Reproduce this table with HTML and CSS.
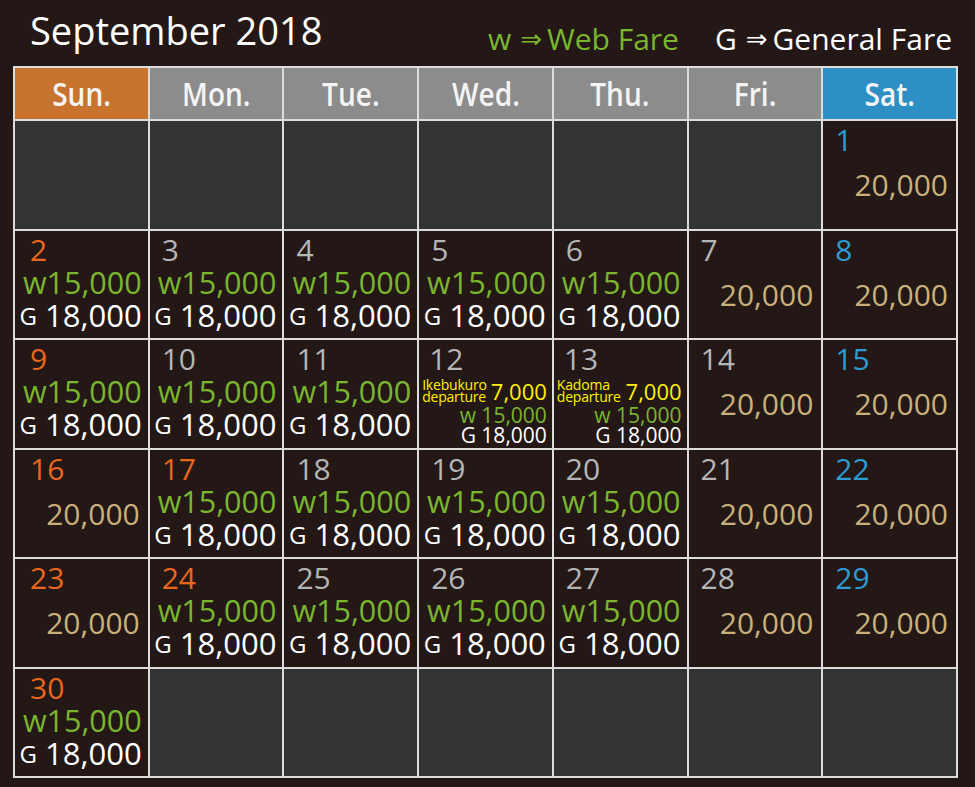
FILE: index.html
```html
<!DOCTYPE html>
<html lang="en">
<head>
<meta charset="utf-8">
<title>September 2018</title>
<link rel="stylesheet" href="styles.css">
</head>
<body>
<div class="page">
  <div class="top">
    <h1 class="title">September 2018</h1>
    <div class="legend">
      <span class="lg-web">w<span class="arrow">⇒</span>Web Fare</span>
      <span class="lg-gen">G<span class="arrow">⇒</span>General Fare</span>
    </div>
  </div>
  <div class="cal">
    <div class="hd hd-sun"><span>Sun.</span></div>
    <div class="hd hd-wk"><span>Mon.</span></div>
    <div class="hd hd-wk"><span>Tue.</span></div>
    <div class="hd hd-wk"><span>Wed.</span></div>
    <div class="hd hd-wk"><span>Thu.</span></div>
    <div class="hd hd-wk"><span>Fri.</span></div>
    <div class="hd hd-sat"><span>Sat.</span></div>

    <!-- row 1 -->
    <div class="cell empty"></div>
    <div class="cell empty"></div>
    <div class="cell empty"></div>
    <div class="cell empty"></div>
    <div class="cell empty"></div>
    <div class="cell empty"></div>
    <div class="cell"><div class="day c-sat">1</div><div class="gen">20,000</div></div>

    <!-- row 2 -->
    <div class="cell first"><div class="day c-sun">2</div><div class="w">w15,000</div><div class="g"><span class="gl">G</span> 18,000</div></div>
    <div class="cell"><div class="day c-wk">3</div><div class="w">w15,000</div><div class="g"><span class="gl">G</span> 18,000</div></div>
    <div class="cell"><div class="day c-wk">4</div><div class="w">w15,000</div><div class="g"><span class="gl">G</span> 18,000</div></div>
    <div class="cell"><div class="day c-wk">5</div><div class="w">w15,000</div><div class="g"><span class="gl">G</span> 18,000</div></div>
    <div class="cell"><div class="day c-wk">6</div><div class="w">w15,000</div><div class="g"><span class="gl">G</span> 18,000</div></div>
    <div class="cell"><div class="day c-wk">7</div><div class="gen">20,000</div></div>
    <div class="cell"><div class="day c-sat">8</div><div class="gen">20,000</div></div>

    <!-- row 3 -->
    <div class="cell first"><div class="day c-sun">9</div><div class="w">w15,000</div><div class="g"><span class="gl">G</span> 18,000</div></div>
    <div class="cell"><div class="day c-wk">10</div><div class="w">w15,000</div><div class="g"><span class="gl">G</span> 18,000</div></div>
    <div class="cell"><div class="day c-wk">11</div><div class="w">w15,000</div><div class="g"><span class="gl">G</span> 18,000</div></div>
    <div class="cell sp">
      <div class="day c-wk">12</div>
      <div class="dep"><span class="lbl">Ikebukuro<br>departure</span><span class="dp">7,000</span></div>
      <div class="w2">w 15,000</div>
      <div class="g2">G 18,000</div>
    </div>
    <div class="cell sp">
      <div class="day c-wk">13</div>
      <div class="dep"><span class="lbl">Kadoma<br>departure</span><span class="dp">7,000</span></div>
      <div class="w2">w 15,000</div>
      <div class="g2">G 18,000</div>
    </div>
    <div class="cell"><div class="day c-wk">14</div><div class="gen">20,000</div></div>
    <div class="cell"><div class="day c-sat">15</div><div class="gen">20,000</div></div>

    <!-- row 4 -->
    <div class="cell first"><div class="day c-sun">16</div><div class="gen">20,000</div></div>
    <div class="cell"><div class="day c-sun">17</div><div class="w">w15,000</div><div class="g"><span class="gl">G</span> 18,000</div></div>
    <div class="cell"><div class="day c-wk">18</div><div class="w">w15,000</div><div class="g"><span class="gl">G</span> 18,000</div></div>
    <div class="cell"><div class="day c-wk">19</div><div class="w">w15,000</div><div class="g"><span class="gl">G</span> 18,000</div></div>
    <div class="cell"><div class="day c-wk">20</div><div class="w">w15,000</div><div class="g"><span class="gl">G</span> 18,000</div></div>
    <div class="cell"><div class="day c-wk">21</div><div class="gen">20,000</div></div>
    <div class="cell"><div class="day c-sat">22</div><div class="gen">20,000</div></div>

    <!-- row 5 -->
    <div class="cell first"><div class="day c-sun">23</div><div class="gen">20,000</div></div>
    <div class="cell"><div class="day c-sun">24</div><div class="w">w15,000</div><div class="g"><span class="gl">G</span> 18,000</div></div>
    <div class="cell"><div class="day c-wk">25</div><div class="w">w15,000</div><div class="g"><span class="gl">G</span> 18,000</div></div>
    <div class="cell"><div class="day c-wk">26</div><div class="w">w15,000</div><div class="g"><span class="gl">G</span> 18,000</div></div>
    <div class="cell"><div class="day c-wk">27</div><div class="w">w15,000</div><div class="g"><span class="gl">G</span> 18,000</div></div>
    <div class="cell"><div class="day c-wk">28</div><div class="gen">20,000</div></div>
    <div class="cell"><div class="day c-sat">29</div><div class="gen">20,000</div></div>

    <!-- row 6 -->
    <div class="cell first"><div class="day c-sun">30</div><div class="w">w15,000</div><div class="g"><span class="gl">G</span> 18,000</div></div>
    <div class="cell empty"></div>
    <div class="cell empty"></div>
    <div class="cell empty"></div>
    <div class="cell empty"></div>
    <div class="cell empty"></div>
    <div class="cell empty"></div>
  </div>
</div>
</body>
</html>
```
FILE: styles.css
```css
* { box-sizing: border-box; }

body {
  margin: 0;
  background: #231815;
  font-family: "Open Sans", "Noto Sans", "DejaVu Sans", sans-serif;
}

.page {
  width: 975px;
  height: 787px;
}

.top {
  display: flex;
  justify-content: space-between;
  align-items: flex-start;
  height: 66px;
  padding: 0 23px 0 30px;
}

.title {
  margin: 8px 0 0;
  font-size: 38px;
  font-weight: 400;
  line-height: 44px;
  color: #ffffff;
}

.legend {
  margin-top: 21px;
  display: flex;
  gap: 36px;
  font-size: 30px;
  line-height: 36px;
}

.arrow {
  font-family: "DejaVu Sans", sans-serif;
  font-size: 26px;
  margin: 0 5px 0 9px;
  position: relative;
  top: -2px;
}

.lg-web { color: #7ab52e; }
.lg-gen { color: #ffffff; }

.cal {
  margin-left: 13px;
  width: 945px;
  display: grid;
  grid-template-columns: repeat(7, 1fr);
  grid-template-rows: 51px repeat(6, 107.5px);
  gap: 2px;
  padding: 2px;
  background: #dcdcdc;
}

.hd {
  display: flex;
  align-items: center;
  justify-content: center;
  color: #f4f4f4;
  font-size: 33px;
  font-weight: 600;
}

.hd span {
  display: inline-block;
  transform: scaleX(0.85);
}

.hd-sun { background: #c8732e; }
.hd-wk { background: #8c8c8c; }
.hd-sat { background: #2e8fc4; }

.cell {
  background: #231815;
  padding: 2px 6px 0 0;
  min-width: 0;
}

.cell.empty { background: #313433; }

.day {
  font-size: 30px;
  line-height: 33px;
  padding-left: 12px;
}

.cell.first .day { padding-left: 15px; }

.c-sun { color: #e8661e; }
.c-wk { color: #b5b5b5; }
.c-sat { color: #2e9bd2; }

.w {
  font-size: 30.5px;
  line-height: 33px;
  text-align: right;
  color: #7ab52e;
  white-space: nowrap;
}

.g {
  font-size: 31px;
  line-height: 33px;
  text-align: right;
  color: #ffffff;
  white-space: nowrap;
}

.gl {
  font-size: 24px;
  vertical-align: 2px;
}

.gen {
  margin-top: 12px;
  padding-right: 2px;
  font-size: 30px;
  line-height: 33px;
  text-align: right;
  color: #c9b07b;
}

.cell.sp {
  padding: 2px 5px 0 3px;
}

.sp .day {
  padding-left: 7px;
}

.dep {
  margin-top: 4px;
  display: flex;
  justify-content: space-between;
  align-items: flex-end;
  color: #fff100;
}

.lbl {
  font-size: 14px;
  line-height: 12px;
  letter-spacing: -0.2px;
}

.dp {
  font-size: 22px;
  line-height: 24px;
}

.w2 {
  margin-top: 2px;
  font-size: 21px;
  line-height: 20px;
  text-align: right;
  color: #7ab52e;
}

.g2 {
  font-size: 21px;
  line-height: 20px;
  text-align: right;
  color: #ffffff;
}
```
